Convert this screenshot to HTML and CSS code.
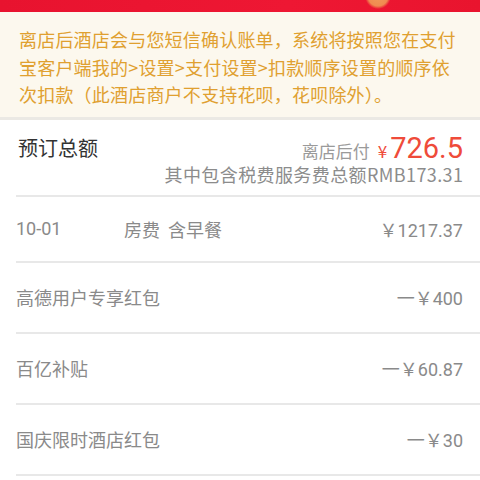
FILE: index.html
```html
<!DOCTYPE html>
<html lang="zh-CN">
<head>
<meta charset="utf-8">
<link rel="stylesheet" href="styles.css">
</head>
<body>
<div class="page">
  <div class="topband"></div>
  <div class="notice">离店后酒店会与您短信确认账单，系统将按照您在支付宝客户端我的&gt;设置&gt;支付设置&gt;扣款顺序设置的顺序依次扣款（此酒店商户不支持花呗，花呗除外）。</div>
  <div class="total">
    <div class="total-title">预订总额</div>
    <div class="total-right">
      <div class="total-line"><span class="pay-later">离店后付</span><span class="yen">¥</span><span class="amount">726.5</span></div>
      <div class="total-sub">其中包含税费服务费总额RMB173.31</div>
    </div>
  </div>
  <div class="list">
    <div class="row row-first">
      <span class="date">10-01</span>
      <span class="desc">房费&nbsp;&nbsp;含早餐</span>
      <span class="price">￥1217.37</span>
    </div>
    <div class="row">
      <span class="desc-main">高德用户专享红包</span>
      <span class="price">一￥400</span>
    </div>
    <div class="row">
      <span class="desc-main">百亿补贴</span>
      <span class="price">一￥60.87</span>
    </div>
    <div class="row row-last">
      <span class="desc-main">国庆限时酒店红包</span>
      <span class="price">一￥30</span>
    </div>
  </div>
</div>
</body>
</html>
```
FILE: styles.css
```css
* { box-sizing: border-box; }
html, body { margin: 0; padding: 0; background: #fff; }
body {
  font-family: "Noto Sans CJK SC", "Noto Sans", sans-serif;
  width: 480px;
  height: 480px;
  overflow: hidden;
}
.topband {
  height: 12px;
  background:
    radial-gradient(circle at 378px -4px, #f19a5a 0, #f08a50 10px, rgba(240,100,60,0) 13px),
    linear-gradient(90deg, #e8132f, #ee1733 60%, #e9142e);
}
.notice {
  background: #fcf8ee;
  color: #e0a030;
  font-size: 18px;
  line-height: 27.5px;
  letter-spacing: 0.2px;
  padding: 14px 14px 8px 19px;
  border-bottom: 3px solid #ebe9e4;
}
.total {
  display: flex;
  justify-content: space-between;
  align-items: flex-start;
  padding: 14px 17px 11px 2px;
  border-bottom: 2px solid #e8e8e8;
  margin-left: 16px;
}
.total-title {
  font-size: 20px;
  line-height: 28px;
  color: #333;
}
.total-right {
  display: flex;
  flex-direction: column;
  align-items: flex-end;
  margin-top: 1px;
}
.total-line {
  display: flex;
  align-items: baseline;
  line-height: 26px;
}
.pay-later {
  font-size: 17px;
  color: #9a9a9a;
}
.yen {
  font-size: 17px;
  color: #ef4b3a;
  margin-left: 8px;
  margin-right: 3px;
}
.amount {
  font-family: "Roboto", "Noto Sans", sans-serif;
  font-size: 29px;
  color: #ef4b3a;
}
.total-sub {
  font-size: 18px;
  line-height: 20px;
  letter-spacing: 0.4px;
  margin-right: -0.4px;
  color: #8c8c8c;
}
.list {
  margin-left: 16px;
}
.row {
  display: flex;
  align-items: center;
  height: 71px;
  padding-right: 17px;
  border-bottom: 2px solid #e8e8e8;
  color: #8a8a8a;
  font-size: 18px;
}
.row-first { height: 66px; }
.date {
  font-family: "Roboto", "Noto Sans", sans-serif;
  width: 108px;
  font-size: 18px;
}
.desc { flex: 1; }
.desc-main { flex: 1; }
.price {
  margin-left: auto;
  font-family: "Roboto", "Noto Sans CJK SC", sans-serif;
}
```
